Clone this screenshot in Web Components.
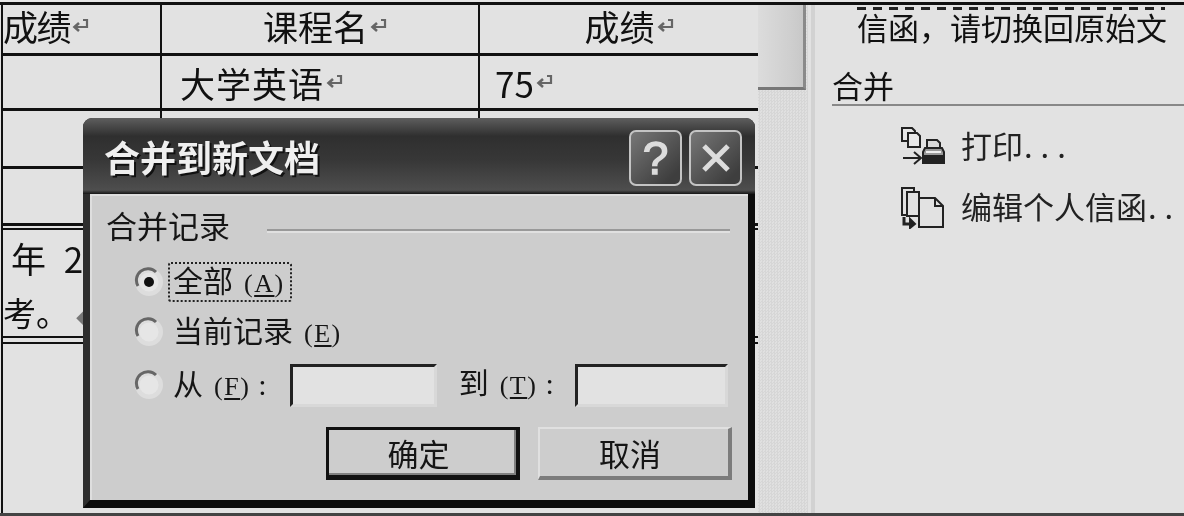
<!DOCTYPE html>
<html lang="zh">
<head>
<meta charset="utf-8">
<title>合并到新文档</title>
<style>
  html, body { margin: 0; background: #e2e2e2; }
  body { width: 1184px; height: 516px; overflow: hidden; font-family: "Noto Sans CJK SC", "Liberation Sans", sans-serif; color: #111; }
</style>
</head>
<body>
<app-frame>
  <doc-table>
    <doc-cell lift style="letter-spacing:-1.5px">成绩<para-mark></para-mark></doc-cell>
    <doc-cell lift align="center" indent="10">课程名<para-mark></para-mark></doc-cell>
    <doc-cell lift align="center" indent="20">成绩<para-mark></para-mark></doc-cell>
    <doc-cell></doc-cell>
    <doc-cell indent="18" style="letter-spacing:1px">大学英语<para-mark></para-mark></doc-cell>
    <doc-cell indent="15">75<para-mark></para-mark></doc-cell>
    <doc-cell></doc-cell><doc-cell></doc-cell><doc-cell></doc-cell>
    <doc-cell></doc-cell><doc-cell></doc-cell><doc-cell></doc-cell>
    <doc-note></doc-note>
  </doc-table>
  <scroll-track></scroll-track>
  <task-pane></task-pane>
  <merge-dialog></merge-dialog>
</app-frame>

<script>
class AppFrame extends HTMLElement {
  constructor() {
    super()
    this.attachShadow({ mode: 'open' }).innerHTML = `
      <style>
        :host { display: block; height: 516px; box-sizing: border-box; padding-top: 2px; filter: blur(.55px); position: relative; background: #e6e6e6; overflow: hidden; }
        .frame { display: flex; height: 511px; border-top: 3px solid #111; background: #e2e2e2; }
        .edge { position: absolute; left: 0; right: 0; bottom: 0; height: 3px; background: #444; }
      </style>
      <div class="frame"><slot></slot></div>
      <div class="edge"></div>`
  }
}

class DocTable extends HTMLElement {
  constructor() {
    super()
    this.attachShadow({ mode: 'open' }).innerHTML = `
      <style>
        :host { display: grid; flex: none; width: 758px; box-sizing: border-box; padding-left: 1px;
          grid-template-columns: 159px 318px 280px; grid-template-rows: 51px 55px 58px 57px 1fr; }
      </style>
      <slot></slot>`
  }
}

class DocCell extends HTMLElement {
  constructor() {
    super()
    const indent = this.getAttribute('indent') || 0
    const center = this.getAttribute('align') === 'center'
    this.attachShadow({ mode: 'open' }).innerHTML = `
      <style>
        :host { display: flex; align-items: center; box-sizing: border-box; white-space: nowrap;
          border-left: 2px solid #111; border-bottom: 3px solid #111; font-size: 35px; line-height: 1;
          padding-left: ${indent}px; justify-content: ${center ? 'center' : 'flex-start'}; }
        :host([lift]) { padding-bottom: 7px; }
      </style>
      <slot></slot>`
  }
}

class DocNote extends HTMLElement {
  constructor() {
    super()
    this.attachShadow({ mode: 'open' }).innerHTML = `
      <style>
        :host { display: block; grid-column: 1 / -1; overflow: hidden; border-left: 2px solid #111; font-size: 35px; line-height: 1; }
        .box { border-top: 2px solid #111; margin-top: 2px; height: 110px; border-bottom: 2px solid #111; box-sizing: border-box; padding-top: 10px; }
        .line { height: 47px; white-space: nowrap; }
        .one { padding-left: 8px; word-spacing: 10px; }
        .two { font-size: 33px; padding-top: 9px; }
        .mark { margin-left: 7px; color: #777; font-size: 20px; }
        .under { border-bottom: 2px solid #111; margin-top: 4px; }
      </style>
      <div class="box">
        <div class="line one">年 2</div>
        <div class="line two">考。<span class="mark">◆</span></div>
      </div>
      <div class="under"></div>`
  }
}

class ParaMark extends HTMLElement {
  constructor() {
    super()
    this.attachShadow({ mode: 'open' }).innerHTML = `
      <style>:host { display: inline-block; width: 17px; height: 16px; margin-left: 2px; letter-spacing: 0; } svg { display: block; }</style>
      <svg width="17" height="16" viewBox="0 0 17 16" fill="none" stroke="#666" stroke-width="2.2">
        <path d="M11 2h4v7H4"/><path d="M7 5 2.500 9 7 13" stroke-width="2.600"/>
      </svg>`
  }
}

class ScrollTrack extends HTMLElement {
  constructor() {
    super()
    this.attachShadow({ mode: 'open' }).innerHTML = `
      <style>
        :host { display: flex; flex-direction: column; flex: none; width: 50px;
          background: repeating-conic-gradient(#d6d6d6 0 25%, #e0e0e0 0 50%) 0 0 / 3px 3px; }
        .thumb { height: 85px; box-sizing: border-box; background: linear-gradient(90deg, #dcdcdc, #cfcfcf 70%, #c8c8c8);
          border-bottom: 3px solid #777; border-right: 3px solid #8a8a8a; width: 48px; }
      </style>
      <div class="thumb"></div>`
  }
}

class TaskPane extends HTMLElement {
  constructor() {
    super()
    this.attachShadow({ mode: 'open' }).innerHTML = `
      <style>
        :host { display: block; flex: 1; min-width: 0; border-left: 4px solid #d2d2d2; margin-left: 3px; font-size: 31px; line-height: 1; overflow: hidden; padding-left: 15px; }
        .dots { margin: 2px 0 0 27px; width: 308px; height: 3px; background: repeating-linear-gradient(90deg, #222 0 9px, transparent 9px 16px); }
        .top { margin-left: 27px; height: 40px; white-space: nowrap; box-sizing: border-box; padding-top: 1px; }
        .head { margin: 19px 0 0 2px; height: 37px; border-bottom: 2px solid #888; box-sizing: border-box; }
        .items { display: flex; flex-direction: column; gap: 20px; padding: 18px 0 0 71px; }
      </style>
      <div class="dots"></div>
      <div class="top">信函，请切换回原始文</div>
      <div class="head">合并</div>
      <div class="items">
        <pane-item><svg slot="icon" width="44" height="40" viewBox="0 0 44 40" fill="#e8e8e8" stroke="#222" stroke-width="2">
          <path d="M1 1h10l3 3v10H1z"/><path d="M7 6h9l3 3v11H7z"/>
          <path d="M2 31h17M13 25l7 6-7 6" fill="none"/>
          <path d="M26 20v-7h10l3 3v4" fill="#d8d8d8"/><path d="M24 21h17l2 4v11H22V25z" fill="#999"/><path d="M23 29h19v7H23z" fill="#222"/><path d="M25 25h15" stroke="#eee"/>
        </svg>打印<dot-run>...</dot-run></pane-item>
        <pane-item><svg slot="icon" width="44" height="42" viewBox="0 0 44 42" fill="#e2e2e2" stroke="#222" stroke-width="2">
          <path d="M13 5V1H1v27h5" fill="none"/><path d="M18 10V5H6v24h12" fill="none"/>
          <path d="M18 11h16l8 8v21H18z"/><path d="M34 11v8h8" fill="none"/>
          <path d="M3 30v7h7" fill="none" stroke-width="3"/><path d="M9 32l5 5-5 4z" fill="#222"/>
        </svg>编辑个人信函<dot-run>..</dot-run></pane-item>
      </div>`
  }
}

class DotRun extends HTMLElement {
  constructor() {
    super()
    this.attachShadow({ mode: 'open' }).innerHTML = `<style>:host { display: inline; letter-spacing: 8px; margin-left: 1px; }</style><slot></slot>`
  }
}

class PaneItem extends HTMLElement {
  constructor() {
    super()
    this.attachShadow({ mode: 'open' }).innerHTML = `
      <style>
        :host { display: flex; align-items: center; gap: 16px; height: 41px; white-space: nowrap; color: #222; }
        ::slotted(svg) { flex: none; margin-top: 4px; }
      </style>
      <slot name="icon"></slot><span><slot></slot></span>`
  }
}

class TitleButton extends HTMLElement {
  constructor() {
    super()
    this.attachShadow({ mode: 'open' }).innerHTML = `
      <style>
        :host { display: grid; place-items: center; width: 53px; height: 56px; margin-top: 3px; box-sizing: border-box; border: 2px solid #c4c4c4; border-radius: 7px;
          background: linear-gradient(135deg, #777, #3e3e3e 85%); color: #dcdcdc; font: 400 46px/1 "Liberation Sans", sans-serif; -webkit-text-stroke: 1.400px #dcdcdc; text-shadow: none; }
        ::slotted(svg) { display: block; }
      </style>
      <slot></slot>`
  }
}

class RadioOption extends HTMLElement {
  constructor() {
    super()
    this.attachShadow({ mode: 'open' }).innerHTML = `
      <style>
        :host { display: flex; align-items: center; gap: 4px; white-space: nowrap; }
        svg { flex: none; }
        .label { padding: 0 5px 0 3px; line-height: 30px; height: 36px; border: 2px solid transparent; border-radius: 3px; }
        :host([checked]) .label { border: 2px dotted #222; }
        .dot { display: none; }
        :host([checked]) .dot { display: block; }
      </style>
      <svg width="30" height="30" viewBox="0 0 30 30">
        <circle cx="15" cy="15" r="14" fill="#e2e2e2" opacity=".75"/>
        <circle cx="15" cy="15" r="9.500" fill="#e6e6e6"/>
        <path d="M4 19A11.500 11.500 0 0 1 22 5" fill="none" stroke="#666" stroke-width="3"/>
        <circle class="dot" cx="15" cy="15" r="5" fill="#111"/>
      </svg>
      <span class="label"><slot></slot></span>`
  }
}

class AccessKey extends HTMLElement {
  constructor() {
    super()
    const key = this.getAttribute('key')
    this.attachShadow({ mode: 'open' }).innerHTML = `<style>
        :host { display: inline; font: 26px "Liberation Serif", serif; letter-spacing: 1.500px; margin-left: 11px; }
        u { text-underline-offset: 3px; }
      </style>(<u>${key}</u>)`
  }
}

class FieldBox extends HTMLElement {
  constructor() {
    super()
    this.attachShadow({ mode: 'open' }).innerHTML = `
      <style>
        :host { display: block; flex: none; height: 43px; box-sizing: border-box; background: #e2e2e2;
          border-top: 3px solid #222; border-left: 3px solid #222; border-right: 3px solid #d8d8d8; border-bottom: 3px solid #d8d8d8; }
      </style>`
  }
}

class DialogButton extends HTMLElement {
  constructor() {
    super()
    this.attachShadow({ mode: 'open' }).innerHTML = `
      <style>
        :host { display: grid; place-items: center; width: 194px; height: 53px; box-sizing: border-box; background: #cdcdcd; font-size: 31px; line-height: 1; padding-right: 8px;
          border-top: 2px solid #e0e0e0; border-left: 2px solid #e0e0e0; border-right: 4px solid #7c7c7c; border-bottom: 4px solid #7c7c7c; }
        :host([primary]) { border: 3px solid #111; border-right-width: 4px; border-bottom-width: 5px; box-shadow: inset -2px -2px 0 #808080; }
      </style>
      <slot></slot>`
  }
}

class MergeDialog extends HTMLElement {
  constructor() {
    super()
    this.attachShadow({ mode: 'open' }).innerHTML = `
      <style>
        :host { position: absolute; left: 83px; top: 118px; width: 672px; height: 390px; display: flex; flex-direction: column; box-sizing: border-box;
          border-radius: 9px 9px 0 0; background: #222; font-size: 30px; line-height: 1; color: #151515; overflow: hidden; }
        .title { flex: none; height: 76px; box-sizing: border-box; display: flex; align-items: center; justify-content: space-between; padding: 0 13px 0 21px;
          background: linear-gradient(#5e5e5e, #2f2f2f 24%, #373737 55%, #4e4e4e 95%, #151515); color: #efefef;
          font-size: 36px; font-weight: 700; text-shadow: 2px 2px 0 #111; }
        .buttons { display: flex; gap: 7px; }
        .wrap { flex: 1; min-height: 0; display: flex; border-left: 7px solid #2e2e2e; border-right: 7px solid #0c0c0c; border-bottom: 8px solid #0c0c0c; }
        .body { flex: 1; min-width: 0; display: flex; flex-direction: column; background: #cdcdcd; padding: 10px 18px 0 14px; border-top: 2px solid #dedede; border-left: 2px solid #dedede; }
        .legend { display: flex; align-items: center; gap: 37px; height: 36px; font-size: 31px; }
        .legend i { flex: 1; height: 2px; margin-top: 12px; background: #999; box-shadow: 0 2px 0 #e0e0e0; }
        .opts { display: flex; flex-direction: column; padding-left: 28px; margin-top: 15px; }
        .row { display: flex; align-items: center; height: 50px; }
        .row.range { height: 46px; margin-top: 5px; white-space: nowrap; }
        .to { margin-left: 22px; width: 116px; flex: none; padding-bottom: 4px; }
        .colon { margin-left: 8px; font-family: "Liberation Serif", serif; }
        .actions { display: flex; justify-content: flex-end; gap: 18px; margin-top: 19px; margin-right: -2px; }
      </style>
      <div class="title">
        <span>合并到新文档</span>
        <div class="buttons">
          <title-button>?</title-button>
          <title-button><svg width="30" height="30" viewBox="0 0 30 30" fill="none" stroke="#dcdcdc" stroke-width="5"><path d="M3 3 27 27M27 3 3 27"/></svg></title-button>
        </div>
      </div>
      <div class="wrap"><div class="body">
        <div class="legend"><span>合并记录</span><i></i></div>
        <div class="opts">
          <div class="row"><radio-option checked>全部<access-key key="A"></access-key></radio-option></div>
          <div class="row"><radio-option>当前记录<access-key key="E"></access-key></radio-option></div>
          <div class="row range">
            <radio-option>从<access-key key="F"></access-key><span class="colon">:</span></radio-option>
            <field-box style="width:147px;margin-left:16px"></field-box>
            <span class="to">到<access-key key="T"></access-key><span class="colon">:</span></span>
            <field-box style="width:153px"></field-box>
          </div>
        </div>
        <div class="actions"><dialog-button primary>确定</dialog-button><dialog-button>取消</dialog-button></div>
      </div></div>`
  }
}

customElements.define('app-frame', AppFrame)
customElements.define('doc-table', DocTable)
customElements.define('doc-cell', DocCell)
customElements.define('doc-note', DocNote)
customElements.define('para-mark', ParaMark)
customElements.define('scroll-track', ScrollTrack)
customElements.define('task-pane', TaskPane)
customElements.define('dot-run', DotRun)
customElements.define('pane-item', PaneItem)
customElements.define('title-button', TitleButton)
customElements.define('radio-option', RadioOption)
customElements.define('access-key', AccessKey)
customElements.define('field-box', FieldBox)
customElements.define('dialog-button', DialogButton)
customElements.define('merge-dialog', MergeDialog)
</script>
</body>
</html>
